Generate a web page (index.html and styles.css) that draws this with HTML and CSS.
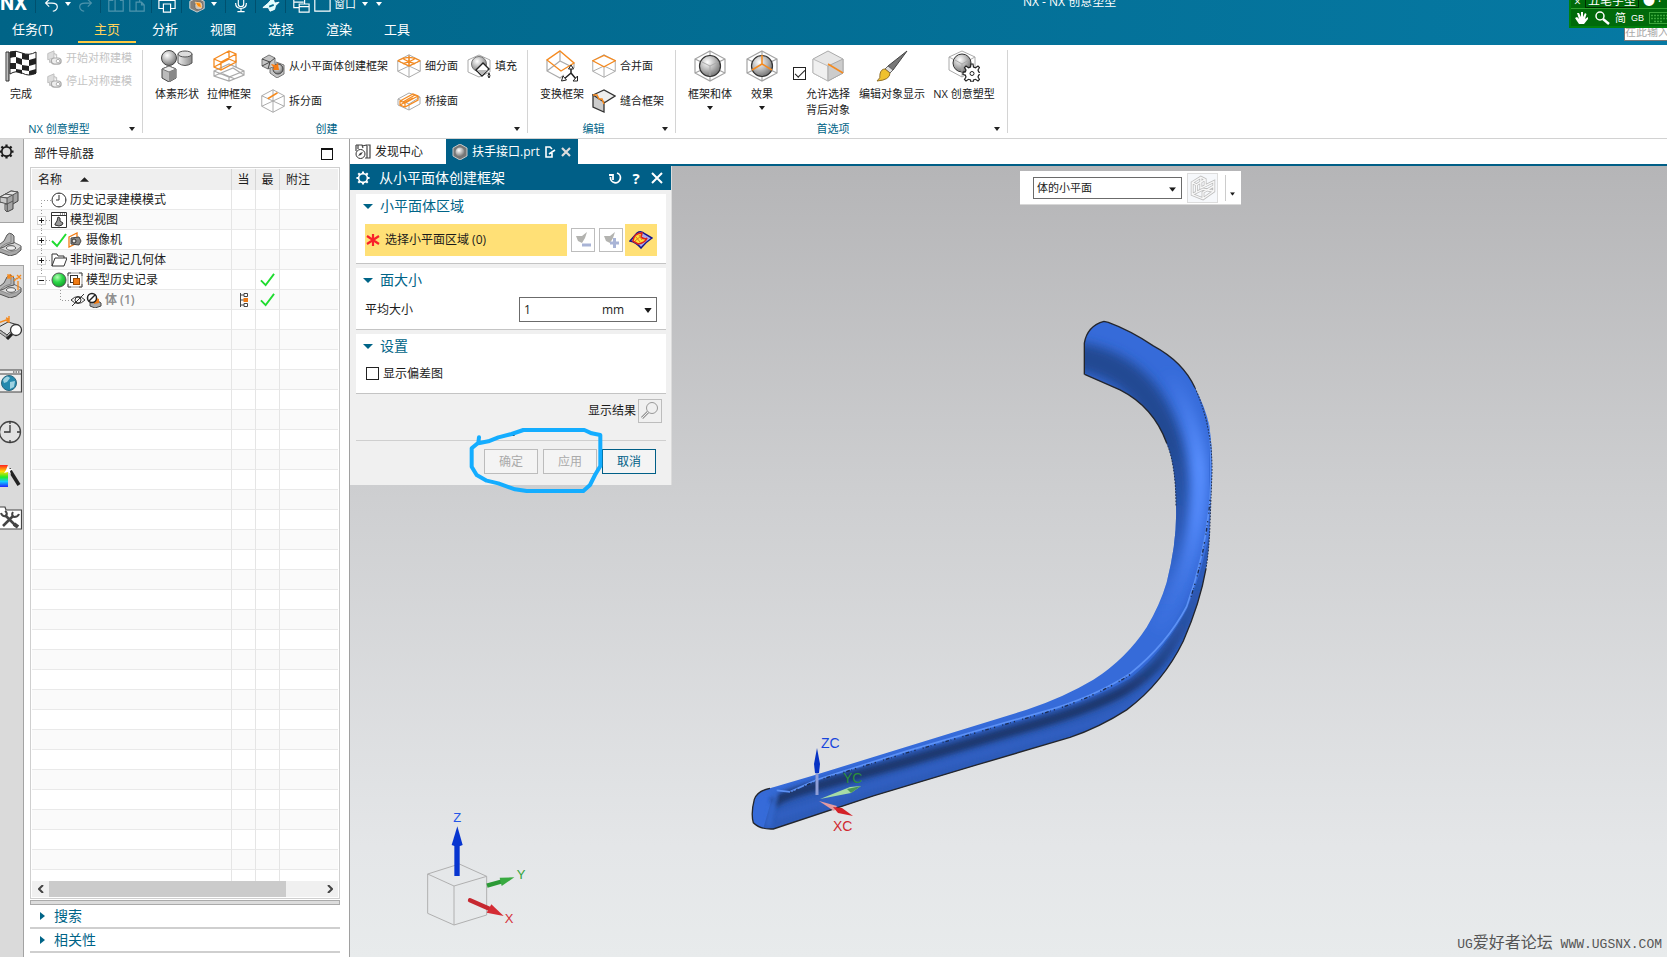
FILE: index.html
```html
<!DOCTYPE html>
<html lang="zh-CN">
<head>
<meta charset="utf-8">
<title>NX - NX 创意塑型</title>
<link rel="stylesheet" href="styles.css">
</head>
<body>
<svg class="defs" aria-hidden="true">
  <defs>
    <radialGradient id="ball" cx=".38" cy=".32" r=".7"><stop offset="0" stop-color="#fff"/><stop offset=".55" stop-color="#b5b5b5"/><stop offset="1" stop-color="#747474"/></radialGradient>
    <radialGradient id="greenball" cx=".38" cy=".3" r=".7"><stop offset="0" stop-color="#b8ffb8"/><stop offset=".5" stop-color="#2fd84a"/><stop offset="1" stop-color="#12a52c"/></radialGradient>
    <linearGradient id="steel" x1="0" x2="1"><stop offset="0" stop-color="#eee"/><stop offset="1" stop-color="#8a8a8a"/></linearGradient>
    <linearGradient id="rainbow" x1="0" x2="0" y1="0" y2="1"><stop offset="0" stop-color="#f22"/><stop offset=".3" stop-color="#fd0"/><stop offset=".55" stop-color="#2e2"/><stop offset=".75" stop-color="#1cf"/><stop offset="1" stop-color="#22f"/></linearGradient>
    <symbol id="hex" viewBox="0 0 32 32"><path d="M16 1 31 9V23L16 31 1 23V9ZM1 9 16 16 31 9M16 16V31M1 23 16 16 31 23M16 1V16" fill="none" stroke="#a3a3a3" stroke-width="1.2"/></symbol>
    <symbol id="arrow" viewBox="0 0 6 4"><path d="M0 0H6L3 4Z" fill="currentColor"/></symbol>
    <symbol id="tick" viewBox="0 0 16 16"><path d="M1 9 6 14 15 2" fill="none" stroke="#1fdc30" stroke-width="2"/></symbol>
    <symbol id="gear" viewBox="0 0 16 16"><circle cx="8" cy="8" r="5" fill="none" stroke="currentColor" stroke-width="1.800"/><path d="M8 .500V3M8 13V15.500M.500 8H3M13 8H15.500M2.600 2.600 4.400 4.400M11.600 11.600 13.400 13.400M2.600 13.400 4.400 11.600M11.600 4.400 13.400 2.600" stroke="currentColor" stroke-width="2.400"/></symbol>
    <symbol id="sym" viewBox="0 0 18 18"><path d="M2 4 9 1V9L2 11ZM4 11V14L9 13M9 4 12 5V9" fill="#ddd" stroke="#bbb"/><rect x="6" y="9" width="11" height="7" rx="3.5" fill="#eee" stroke="#aaa" stroke-width="1.4"/><circle cx="13.500" cy="12.500" r="2" fill="#fff" stroke="#aaa"/></symbol>
    <symbol id="plus" viewBox="0 0 19 20"><path d="M9.500 0V20M14 10.500H19" stroke="#999" stroke-dasharray="1 2"/><rect x="5.500" y="6.500" width="8" height="8" fill="#fff" stroke="#d0d0d0"/><path d="M7 10.500H12M9.500 8V13" stroke="#222"/></symbol>
    <symbol id="minus" viewBox="0 0 19 20"><path d="M9.500 0V6M14 10.500H19" stroke="#999" stroke-dasharray="1 2"/><rect x="5.500" y="6.500" width="8" height="8" fill="#fff" stroke="#d0d0d0"/><path d="M7 10.500H12" stroke="#222"/></symbol>
    <symbol id="first" viewBox="0 0 19 20"><path d="M9.500 20V10.500H19" fill="none" stroke="#999" stroke-dasharray="1 2"/></symbol>
    <symbol id="leaf" viewBox="0 0 38 20"><path d="M28.500 0V10.500H38" fill="none" stroke="#999" stroke-dasharray="1 2"/></symbol>
    <symbol id="bracket" viewBox="0 0 24 24"><path d="M-2 15 6 12 14 10 22 14V18Q18 23 11 24L-2 19Z" fill="#a8a8a8" stroke="#555"/><path d="M-2 15 4 13 14 10 22 14Q19 19 10 20Z" fill="#d9d9d9" stroke="#777" stroke-width=".7"/><path d="M-2 13Q2 12 5 9L8 3Q10 0 13 2L15 4V11Q8 12 5 15L-2 17Z" fill="#b4b4b4" stroke="#555"/><path d="M12 2V10Q6 11 2 15" fill="none" stroke="#888"/><ellipse cx="12" cy="16" rx="4.500" ry="2.300" fill="#eee" stroke="#555"/></symbol>
  </defs>
</svg>

<header class="titlebar">
  <div class="quick">
    <span class="logo">NX</span><i class="sep"></i>
    <button aria-label="撤消"><svg viewBox="0 0 20 20"><path d="M5 9H11Q17 9 17 13 17 17 12 18M8 5 4 9 8 13" class="w"/></svg></button>
    <button class="mini" aria-label="撤消列表"><svg viewBox="0 0 6 4"><use href="#arrow"/></svg></button>
    <button class="dim" aria-label="重做"><svg viewBox="0 0 20 20"><path d="M15 9H9Q3 9 3 13 3 17 8 18M12 5 16 9 12 13" class="w"/></svg></button><i class="sep"></i>
    <button class="dim" aria-label="复制"><svg viewBox="0 0 20 20"><path d="M7 6H2V18H9M9 3H15L18 6V18H9ZM15 3V6H18" class="w"/></svg></button>
    <button class="dim" aria-label="粘贴"><svg viewBox="0 0 20 20"><path d="M9 18H2V3H13V8M9 8H15L18 11V18H9ZM15 8V11H18" class="w"/></svg></button><i class="sep"></i>
    <button aria-label="打印"><svg viewBox="0 0 20 20"><path d="M6 15H1V6H19V15H14M6 10H14V19H6Z" class="w"/></svg></button><i class="sep"></i>
    <button aria-label="显示"><svg viewBox="0 0 20 20"><path d="M2 7 10 3 18 7V15L10 19 2 15Z" fill="#857f79" stroke="#ddd"/><circle cx="12" cy="12" r="4.500" fill="#c9c4bf" stroke="#666"/><path d="M8 8 14 9 15 14 11 13Z" fill="#f80" stroke="#fc8"/></svg></button>
    <button class="mini" aria-label="显示选项"><svg viewBox="0 0 6 4"><use href="#arrow"/></svg></button><i class="sep"></i>
    <button aria-label="语音"><svg viewBox="0 0 20 20"><rect x="7" y="3" width="6" height="10" rx="3" class="w"/><path d="M4 9Q4 15 10 15 16 15 16 9M10 15V18M6 18.500H14" class="w"/></svg></button><i class="sep"></i>
    <button aria-label="触控"><svg viewBox="0 0 20 20"><path d="M1 14 7 9 12 3 14 9 19 8 15 12 14 16 9 18 7 14Z" fill="#dff" stroke="#fff"/><path d="M8 13 13 11" stroke="#05688b" stroke-width="2"/></svg></button><i class="sep"></i>
    <button aria-label="切换窗口"><svg viewBox="0 0 20 20"><path d="M8 14H2V4H14V10M2 8H13M8 10H19V19H8ZM8 13H19" class="w"/></svg></button>
    <button aria-label="窗口布局"><svg viewBox="0 0 20 20"><path d="M2 4H19V18H2Z" class="w"/></svg></button>
    <button class="word">窗口</button>
    <button class="mini" aria-label="窗口列表"><svg viewBox="0 0 6 4"><use href="#arrow"/></svg></button>
    <button class="mini" aria-label="更多"><svg viewBox="0 0 6 4"><use href="#arrow"/></svg></button>
  </div>
  <div class="caption">NX - NX 创意塑型</div>
  <nav class="menu">
    <a href="#task" class="task">任务(T)</a><a href="#home" class="on">主页</a><a href="#analysis">分析</a><a href="#view">视图</a><a href="#select">选择</a><a href="#render">渲染</a><a href="#tools">工具</a>
  </nav>
  <input class="search" aria-label="搜索命令" placeholder="在此输入">
  <div class="ime">
    <div class="ime-top"><span>×</span><b>五笔字型</b><span>● ·</span></div>
    <div class="ime-row">
      <svg width="14" height="14" viewBox="0 0 14 14"><path d="M4 13 0 7 2 6 4 8 2 2 4 2 6 6V1H8V6L10 2 11.500 3 10 8 13 6 13 8 9 13Z" fill="#fff"/></svg>
      <svg width="16" height="14" viewBox="0 0 16 14"><circle cx="6" cy="5" r="4" fill="none" stroke="#fff" stroke-width="1.500"/><path d="M9 8 15 13" stroke="#fff" stroke-width="2.500"/></svg>
      <span>简</span><span class="gb">GB</span>
      <svg width="18" height="12" viewBox="0 0 18 12"><rect x=".5" y=".5" width="22" height="11" fill="none" stroke="#3ba63b"/><path d="M2 3.500H18M2 6.500H18M5 9.500H14" stroke="#3ba63b" stroke-width="1.500" stroke-dasharray="2 1"/></svg>
    </div>
  </div>
</header>

<section class="ribbon" aria-label="功能区">
  <div class="group g1">
    <div class="tools">
      <button class="big"><svg viewBox="0 0 32 32"><path d="M1 2H4V31H1Z" fill="url(#steel)" stroke="#333"/><path d="M5 2Q11 0 17 3 24 6 31 2V23Q24 27 17 23 11 20 5 24Z" fill="#fff" stroke="#222"/><path d="M5 2Q8 1 11 1V7Q8 7 5 8ZM17 3Q21 5 24 4V10Q21 10 17 9ZM11 7 17 9V15L11 13ZM24 10 31 8V14L24 16ZM5 13 11 13V19L5 19ZM17 15 24 16V21L17 20ZM11 19 17 20V24L11 22ZM24 21 31 19V24L24 25Z" fill="#222"/></svg><span>完成</span></button>
      <div class="stack tight">
        <button class="small" disabled><svg viewBox="0 0 18 18"><use href="#sym"/></svg>开始对称建模</button>
        <button class="small" disabled><svg viewBox="0 0 18 18"><use href="#sym"/></svg>停止对称建模</button>
      </div>
    </div>
    <div class="glabel"><span>NX 创意塑型</span><svg viewBox="0 0 6 4"><use href="#arrow"/></svg></div>
  </div>
  <div class="group g2">
    <div class="tools">
      <button class="big"><svg viewBox="0 0 32 32"><path d="M17 4V13Q24 18 31 13V4Z" fill="url(#steel)" stroke="#555"/><ellipse cx="24" cy="4" rx="7" ry="3" fill="#ddd" stroke="#555"/><circle cx="8" cy="8" r="7.500" fill="url(#ball)" stroke="#444"/><path d="M8 16 15 19V28L8 32 1 28V19Z" fill="#bbb" stroke="#444"/><path d="M1 19 8 22 15 19 8 16Z" fill="#eee" stroke="#777"/><path d="M8 22V32L15 28V19Z" fill="#888"/></svg><span>体素形状</span></button>
      <button class="big"><svg viewBox="0 0 32 32"><path d="M1 21 16 14 31 21V25L16 31 1 26ZM1 21 16 27 31 21M16 27V31M1 26 20 18 31 25M8 23 22 29M23 10V18" fill="none" stroke="#aaa" stroke-width="1.200"/><path d="M1 9 16 1 23 4V12L8 20 1 17ZM1 9 8 12 23 4M8 12V20M16 1V9L1 17M16 9 23 12" fill="none" stroke="#f58a1f" stroke-width="1.300"/></svg><span>拉伸框架</span><svg class="dd" viewBox="0 0 6 4"><use href="#arrow"/></svg></button>
      <div class="stack c1">
        <button class="small"><svg viewBox="0 0 24 24"><path d="M1 5 8 1 14 4V12L7 15 1 12ZM9 14V19L16 24 23 20V11L15 8" fill="#c5c5c5" stroke="#777"/><path d="M1 5 9 8 14 4M9 8 7 15M1 12 9 8" fill="none" stroke="#444"/><circle cx="17" cy="15" r="5" fill="url(#ball)" stroke="#444"/><path d="M10 10 15 11 17 9 18 16 12 16 13 14Z" fill="#f47b14"/></svg>从小平面体创建框架</button>
        <button class="small"><svg viewBox="0 0 32 32"><use href="#hex"/><path d="M9 13 22 5" stroke="#f58a1f" stroke-width="2"/></svg>拆分面</button>
      </div>
      <div class="stack c2">
        <button class="small"><svg viewBox="0 0 32 32"><use href="#hex"/><path d="M1 9Q16 0 31 9M1 9 16 16 31 9M8 6Q12 9 24 13M24 6Q20 9 8 13M16 2V16" fill="none" stroke="#f58a1f" stroke-width="1.800"/></svg>细分面</button>
        <button class="small"><svg viewBox="0 0 24 24"><path d="M1 10 12 4 23 8V15L12 21 1 16ZM1 10 12 15 23 8M12 15V21" fill="none" stroke="#aaa"/><path d="M3 12 16 5 21 7V11L8 18 3 16ZM3 12 8 14 21 7M8 14V18M6 13 18 6M3 16 16 9" fill="none" stroke="#f58a1f" stroke-width="1.300"/></svg>桥接面</button>
      </div>
      <div class="stack">
        <button class="small"><svg viewBox="0 0 24 24"><path d="M12 1 23 6V18L12 23 1 18V6Z" fill="none" stroke="#aaa"/><circle cx="12" cy="10" r="7.500" fill="url(#ball)" stroke="#777"/><path d="M9 16 16 9 22 15 15 22Z" fill="#fff" stroke="#222" stroke-width="1.400"/><path d="M10 16H21L15 21Z" fill="#bbb"/><path d="M22 19Q20 22 22 24 24 22 22 19Z" fill="#fff" stroke="#222"/></svg>填充</button>
        <span class="small"></span>
      </div>
    </div>
    <div class="glabel"><span>创建</span><svg viewBox="0 0 6 4"><use href="#arrow"/></svg></div>
  </div>
  <div class="group g3">
    <div class="tools">
      <button class="big"><svg viewBox="0 0 32 32"><path d="M1 10V21L14 28 18 25M14 11V1M1 21 14 11 28 18M28 13V18" fill="none" stroke="#aaa" stroke-width="1.200"/><path d="M14 1 28 13 15 21 1 10Z" fill="none" stroke="#f58a1f" stroke-width="1.400"/><path d="M25 23V17M25 23 18 29M25 23 30 29" stroke="#222" stroke-width="1.500"/><path d="M22.500 19 25 15 27.500 19ZM17 26 15.500 31 20.500 30ZM31.500 26V31H27Z" fill="#fff" stroke="#222"/></svg><span>变换框架</span></button>
      <div class="stack">
        <button class="small"><svg viewBox="0 0 32 32"><use href="#hex"/><path d="M1 9 16 2 31 9 16 17Z" fill="#fff" stroke="#f58a1f" stroke-width="1.800"/></svg>合并面</button>
        <button class="small"><svg viewBox="0 0 24 24"><path d="M1 6 12 1 23 7 12 14Z" fill="#eee" stroke="#333" stroke-width="1.300"/><path d="M1 6 12 13V23L1 18Z" fill="#ccc" stroke="#333" stroke-width="1.300"/><path d="M1 6 5 6 7 10 10 10 12 15" fill="none" stroke="#f58a1f" stroke-width="1.600"/></svg>缝合框架</button>
      </div>
    </div>
    <div class="glabel"><span>编辑</span><svg viewBox="0 0 6 4"><use href="#arrow"/></svg></div>
  </div>
  <div class="group g4">
    <div class="tools">
      <button class="big"><svg viewBox="0 0 32 32"><use href="#hex"/><circle cx="16" cy="16" r="10.500" fill="url(#ball)" stroke="#333" stroke-width="1.200"/><path d="M8 12 16 16 24 12M16 16V26" fill="none" stroke="#aaa"/></svg><span>框架和体</span><svg class="dd" viewBox="0 0 6 4"><use href="#arrow"/></svg></button>
      <button class="big effect"><svg viewBox="0 0 32 32"><use href="#hex"/><circle cx="16" cy="16" r="10.500" fill="url(#ball)" stroke="#333" stroke-width="1.200"/><path d="M16 5V14L6 20M16 14 26 20" fill="none" stroke="#f58a1f" stroke-width="1.500"/></svg><span>效果</span><svg class="dd" viewBox="0 0 6 4"><use href="#arrow"/></svg></button>
      <label class="big checkbig"><input type="checkbox" class="box" checked><span class="col"><svg viewBox="0 0 32 32"><path d="M16 1 31 9V23L16 31 1 23V9Z" fill="#e6e6e6" stroke="#aaa"/><path d="M1 9 16 16V31L1 23Z" fill="#f0f0f0" stroke="#bbb"/><path d="M16 16 31 9V23L16 31Z" fill="#ccc" stroke="#aaa"/><path d="M16 14 31 23" stroke="#f58a1f" stroke-width="1.500"/></svg><span>允许选择<br>背后对象</span></span></label>
      <button class="big wide"><svg viewBox="0 0 32 32"><path d="M31 1 17 20 12 16Z" fill="#777" stroke="#444"/><path d="M17 20 12 16 9 19 14 23Z" fill="#ddd" stroke="#666"/><path d="M9 19 14 23Q14 30 1 31 5 28 4 24 5 19 9 19Z" fill="#efc12e" stroke="#93722b"/></svg><span>编辑对象显示</span></button>
      <button class="big wide"><svg viewBox="0 0 32 32"><path d="M14 1 27 7V19L14 27 1 20V7ZM1 7 14 14 27 7M14 14V27" fill="none" stroke="#aaa"/><circle cx="14" cy="13" r="9" fill="url(#ball)" stroke="#333"/><path d="M7 10 14 14 21 10M14 14V22" fill="none" stroke="#aaa"/><path d="M23 14H25L25.500 17 27.500 17.800 30 16 31.500 17.500 30 20 30.700 22 33 22.500V24.500L30.700 25 30 27 31.500 29.500 30 31 27.500 29.300 25.500 30 25 32H23L22.500 30 20.500 29.300 18 31 16.500 29.500 18 27 17.300 25 15 24.500V22.500L17.300 22 18 20 16.500 17.500 18 16 20.500 17.800 22.500 17Z" fill="#fff" stroke="#222" stroke-width="1.200"/><circle cx="24" cy="23.500" r="2" fill="none" stroke="#222"/></svg><span>NX 创意塑型</span></button>
    </div>
    <div class="glabel"><span>首选项</span><svg viewBox="0 0 6 4"><use href="#arrow"/></svg></div>
  </div>
</section>

<div class="work">
  <nav class="rail" aria-label="资源条">
    <button aria-label="设置"><svg class="s14" viewBox="0 0 16 16"><use href="#gear"/></svg></button>
    <button aria-label="装配导航器"><svg viewBox="0 0 24 24"><path d="M1 9 12 3 19 4V13L14 16V21L8 24V15L1 14Z" fill="#a5a5a5" stroke="#444"/><path d="M1 9 12 3 19 4 8 10Z" fill="#e4e4e4" stroke="#555"/><path d="M1 9 8 10V16L1 14ZM8 16V24L6 22V16Z" fill="#c9c9c9" stroke="#555"/><path d="M14 7V16M8 16 14 13M6 6 13 7" fill="none" stroke="#555"/></svg></button>
    <button class="on" aria-label="部件导航器"><svg viewBox="0 0 24 24"><use href="#bracket"/></svg></button>
    <button aria-label="约束导航器"><svg viewBox="0 0 24 24"><use href="#bracket"/><path d="M9 0V5M9 2.500H15M12 0 9 2.500 12 5M18 1 22 5M22 1 18 5M15 7 18 4M19 7V16" fill="none" stroke="#f58a1f" stroke-width="1.300"/></svg></button>
    <button aria-label="重用库"><svg viewBox="0 0 24 24"><path d="M-2 12 9 6 19 9 8 19Z" fill="#e4e4e4" stroke="#333"/><path d="M-2 12 8 19V22L-2 15Z" fill="#bbb" stroke="#555"/><path d="M8 23 14 17" stroke="#222" stroke-width="3"/><circle cx="17" cy="14" r="5.500" fill="#fff" stroke="#333" stroke-width="1.300"/><path d="M-1 7 10 3M10 0V7M7 2 10 3 8 6" fill="none" stroke="#f58a1f" stroke-width="1.400"/></svg></button>
    <button aria-label="浏览器"><svg viewBox="0 0 24 24"><path d="M-2 1H22.500V23H-2ZM-2 5H22.500" fill="#eee" stroke="#444" stroke-width="1.200"/><path d="M14 3H21" stroke="#333" stroke-dasharray="1.500 1"/><circle cx="10" cy="14" r="7.500" fill="#2489ae" stroke="#29667d"/><path d="M4 11Q8 5 11 9L8 13 5 14ZM11 13 16 12 15 18 11 20Z" fill="#9ed2e1"/></svg></button>
    <button aria-label="历史记录"><svg viewBox="0 0 24 24"><circle cx="11" cy="12" r="10.500" fill="#e2e2e2" stroke="#444" stroke-width="1.300"/><path d="M11 5V12H5M11 1V4M11 20V23M18 12H21" fill="none" stroke="#333" stroke-width="1.300"/></svg></button>
    <button aria-label="系统材料"><svg viewBox="0 0 24 24"><path d="M-3 1H9V23H-3Z" fill="url(#rainbow)"/><path d="M10 5 20 21" stroke="#222" stroke-width="3.500"/><path d="M9 1 10 5 14 5 11 7 12 11 9 8 5 9 7 6Z" fill="#fff"/></svg></button>
    <button aria-label="角色"><svg viewBox="0 0 24 24"><path d="M-2 4V1H6L7 4H22.500V23H-2" fill="#fff" stroke="#444" stroke-width="1.200"/><path d="M4 20 14 10M6 9 17 20" stroke="#444" stroke-width="2.600"/><path d="M2 7Q3 11 7 10 9 7 6 5M14 6Q12 9 15 11 19 11 20 8" fill="none" stroke="#444" stroke-width="2"/><path d="M15 18 19 21" stroke="#444" stroke-width="4"/></svg></button>
  </nav>

  <aside class="navigator">
    <div class="nav-title"><h2>部件导航器</h2><button class="maxi" aria-label="最大化"></button></div>
    <div class="tree">
      <div class="tree-body">
      <table>
        <colgroup><col class="w-name"><col class="w-flag"><col class="w-flag"><col></colgroup>
        <thead><tr><th>名称<svg class="sort" viewBox="0 0 10 5"><path d="M0 5 5 0 10 5Z" fill="#222"/></svg></th><th class="c">当</th><th class="c">最</th><th>附注</th></tr></thead>
        <tbody>
          <tr><td><div class="node"><svg class="ex" viewBox="0 0 19 20"><use href="#first"/></svg><svg class="ic" viewBox="0 0 16 16"><circle cx="8" cy="8" r="7" fill="#fff" stroke="#333"/><path d="M8 3V8H5M8 1V2M8 14V15M14 8H15" fill="none" stroke="#333"/></svg>历史记录建模模式</div></td><td></td><td></td><td></td></tr>
          <tr><td><div class="node"><svg class="ex" viewBox="0 0 19 20"><use href="#plus"/></svg><svg class="ic" viewBox="0 0 16 16"><path d="M.5 .5H15.500V15.500H.5ZM.5 3.500H15.500" fill="#fff" stroke="#333"/><path d="M9 2H15" stroke="#333" stroke-dasharray="1 1"/><path d="M4 12 6 9 7 5 9 6V9L12 11 11 13 8 14 4 13Z" fill="#999" stroke="#333"/></svg>模型视图</div></td><td></td><td></td><td></td></tr>
          <tr><td><div class="node"><svg class="ex" viewBox="0 0 19 20"><use href="#plus"/></svg><svg class="ic" viewBox="0 0 16 16"><use href="#tick"/></svg><svg class="ic" viewBox="0 0 16 16"><path d="M2 5 10 1V11L2 15Z" fill="#fff" stroke="#f07b14" stroke-width="1.300"/><path d="M4 6 12 5 14 9 12 13 4 12Z" fill="#888" stroke="#444"/><circle cx="7" cy="9" r="2" fill="#ddd" stroke="#333"/></svg>摄像机</div></td><td></td><td></td><td></td></tr>
          <tr><td><div class="node"><svg class="ex" viewBox="0 0 19 20"><use href="#plus"/></svg><svg class="ic" viewBox="0 0 16 16"><path d="M1 14V2H6L7 4H13V6M1 14 4 6H16L13 14Z" fill="#fff" stroke="#333"/></svg>非时间戳记几何体</div></td><td></td><td></td><td></td></tr>
          <tr><td><div class="node"><svg class="ex" viewBox="0 0 19 20"><use href="#minus"/></svg><svg class="ic" viewBox="0 0 16 16"><circle cx="8" cy="8" r="7" fill="url(#greenball)" stroke="#555"/></svg><svg class="ic" viewBox="0 0 16 16"><path d="M1 1H15V15H1Z" fill="none" stroke="#999"/><path d="M1 4V1H4M12 1H15V4M15 12V15H12M4 15H1V12" fill="none" stroke="#555"/><rect x="3.500" y="3.500" width="7" height="7" fill="#fff" stroke="#333"/><rect x="6.500" y="6.500" width="6" height="6" fill="#f07b14" stroke="#a34c00"/></svg>模型历史记录</div></td><td></td><td class="c"><svg class="tk" viewBox="0 0 16 16"><use href="#tick"/></svg></td><td></td></tr>
          <tr><td><div class="node muted"><svg class="ex2" viewBox="0 0 38 20"><use href="#leaf"/></svg><svg class="ic" viewBox="0 0 16 16"><path d="M1 8Q8 1 15 8 8 15 1 8ZM2 14 14 2" fill="none" stroke="#333"/><circle cx="8" cy="8" r="3" fill="none" stroke="#333"/></svg><svg class="ic" viewBox="0 0 16 16"><path d="M4 11 9 7 15 11V14L9 16 4 14Z" fill="#aaa" stroke="#444"/><path d="M8 5 13 7 13 11 8 12Z" fill="#f07b14"/><circle cx="6" cy="6" r="4.500" fill="#fff" stroke="#222" stroke-width="1.500"/><path d="M3 9 9 3" stroke="#222" stroke-width="1.500"/></svg>体 (1)</div></td><td class="c"><svg class="hist" viewBox="0 0 10 16"><path d="M1.500 1V15M1.500 3H5M1.500 8H5M1.500 13H5" stroke="#444"/><path d="M5 1.500H8.500V4.500H5ZM5 11.500H8.500V14.500H5Z" fill="#fff" stroke="#444"/><path d="M4.500 6H9V10H4.500Z" fill="#f07b14"/></svg></td><td class="c"><svg class="tk" viewBox="0 0 16 16"><use href="#tick"/></svg></td><td></td></tr>
          <tr><td></td><td></td><td></td><td></td></tr><tr><td></td><td></td><td></td><td></td></tr>
          <tr><td></td><td></td><td></td><td></td></tr><tr><td></td><td></td><td></td><td></td></tr>
          <tr><td></td><td></td><td></td><td></td></tr><tr><td></td><td></td><td></td><td></td></tr>
          <tr><td></td><td></td><td></td><td></td></tr><tr><td></td><td></td><td></td><td></td></tr>
          <tr><td></td><td></td><td></td><td></td></tr><tr><td></td><td></td><td></td><td></td></tr>
          <tr><td></td><td></td><td></td><td></td></tr><tr><td></td><td></td><td></td><td></td></tr>
          <tr><td></td><td></td><td></td><td></td></tr><tr><td></td><td></td><td></td><td></td></tr>
          <tr><td></td><td></td><td></td><td></td></tr><tr><td></td><td></td><td></td><td></td></tr>
          <tr><td></td><td></td><td></td><td></td></tr><tr><td></td><td></td><td></td><td></td></tr>
          <tr><td></td><td></td><td></td><td></td></tr><tr><td></td><td></td><td></td><td></td></tr>
          <tr><td></td><td></td><td></td><td></td></tr><tr><td></td><td></td><td></td><td></td></tr>
          <tr><td></td><td></td><td></td><td></td></tr><tr><td></td><td></td><td></td><td></td></tr>
          <tr><td></td><td></td><td></td><td></td></tr><tr><td></td><td></td><td></td><td></td></tr>
          <tr><td></td><td></td><td></td><td></td></tr><tr><td></td><td></td><td></td><td></td></tr>
          <tr><td></td><td></td><td></td><td></td></tr><tr><td></td><td></td><td></td><td></td></tr>
        </tbody>
      </table>
      </div>
      <div class="hscroll"><button aria-label="向左"><svg viewBox="0 0 6 8"><path d="M5 0 1 4 5 8" fill="none" stroke="#444" stroke-width="2"/></svg></button><span class="track"><span class="thumb"></span></span><button aria-label="向右"><svg viewBox="0 0 6 8"><path d="M1 0 5 4 1 8" fill="none" stroke="#444" stroke-width="2"/></svg></button></div>
    </div>
    <div class="splitter"></div>
    <button class="fold"><svg viewBox="0 0 5 8"><path d="M0 0 5 4 0 8Z" fill="#006487"/></svg>搜索</button>
    <button class="fold"><svg viewBox="0 0 5 8"><path d="M0 0 5 4 0 8Z" fill="#006487"/></svg>相关性</button>
  </aside>

  <main class="main">
    <div class="tabs">
      <a href="#discover" class="tab"><svg viewBox="0 0 16 16"><path d="M1 1H7L8 4M1 1V7M3 1V5M7 2 12 1V14M13 1H15V14H10" fill="none" stroke="#444" stroke-width="1.200"/><circle cx="5.500" cy="10" r="4.500" fill="#fff" stroke="#333"/><path d="M3 12 5 9 8 8 6 11Z" fill="#444"/></svg>发现中心</a>
      <a href="#part" class="tab on"><svg viewBox="0 0 16 16"><path d="M8 0 15 4V12L8 16 1 12V4Z" fill="#777" stroke="#c8c8c8"/><circle cx="8" cy="8" r="4.500" fill="url(#ball)"/></svg>扶手接口.prt<svg class="t12" viewBox="0 0 12 12"><path d="M8 7V11H2V1H6L8 3M5 8 11 4" fill="none" stroke="#fff" stroke-width="1.600"/></svg><svg class="t12 x" viewBox="0 0 12 12"><path d="M2 2 10 10M10 2 2 10" stroke="#ddd" stroke-width="2.200"/></svg></a>
    </div>
    <div class="canvas">
      <svg class="model" viewBox="0 0 1500 1568" preserveAspectRatio="none" role="img" aria-label="扶手模型">
        <defs>
          <clipPath id="body"><path d="M1034 216 1033 125Q1042 75 1092 62L1105 65Q1170 88 1240 133 1330 180 1365 255 1395 310 1408 365 1418 430 1416 500L1410 650Q1408 720 1398 780 1380 880 1330 990 1270 1110 1160 1190 1080 1240 990 1270L710 1350 400 1440 100 1536Q60 1538 40 1518 32 1490 43 1450 52 1425 90 1418L230 1378 500 1297 860 1190Q970 1155 1060 1103 1160 1040 1220 950 1260 885 1280 820 1312 700 1308 600 1308 480 1280 415 1240 310 1140 261Z"/></clipPath>
          <filter id="b20" x="-20%" y="-20%" width="140%" height="140%"><feGaussianBlur stdDeviation="16"/></filter>
          <filter id="b7" x="-20%" y="-20%" width="140%" height="140%"><feGaussianBlur stdDeviation="7"/></filter>
          <linearGradient id="shade" gradientUnits="userSpaceOnUse" x1="0" y1="150" x2="0" y2="900"><stop offset="0" stop-color="#234a93"/><stop offset=".35" stop-color="#234a93"/><stop offset=".7" stop-color="#2b5ab8"/><stop offset="1" stop-color="#2f60c6" stop-opacity="0"/></linearGradient>
          <linearGradient id="shine" gradientUnits="userSpaceOnUse" x1="0" y1="200" x2="0" y2="1000"><stop offset="0" stop-color="#5a90ff" stop-opacity="0"/><stop offset=".35" stop-color="#5a90ff"/><stop offset=".55" stop-color="#5389fa"/><stop offset="1" stop-color="#4a7fee" stop-opacity="0"/></linearGradient>
          <linearGradient id="side" gradientUnits="userSpaceOnUse" x1="0" y1="800" x2="0" y2="1150"><stop offset="0" stop-color="#24498f" stop-opacity="0"/><stop offset="1" stop-color="#1b376f"/></linearGradient>
        </defs>
        <g clip-path="url(#body)" fill="none">
          <path d="M0 0H1500V1568H0Z" fill="#366bd9"/>
          <path d="M980 160Q1140 175 1220 280 1300 390 1312 560 1320 740 1240 930" stroke="url(#shade)" stroke-width="84" filter="url(#b20)"/>
          <path d="M1280 200Q1390 380 1378 560 1370 760 1250 960" stroke="url(#shine)" stroke-width="46" filter="url(#b20)"/>
          <path d="M1416 620Q1400 760 1340 900 1280 1010 1170 1100 1040 1170 900 1205L500 1317 230 1398 130 1432 95 1450 60 1568H1500V620Z" fill="#2d5bb9"/>
          <path d="M1380 820Q1330 970 1250 1060 1190 1120 1110 1155 1020 1195 900 1228L500 1340 230 1412Q120 1440 100 1462" stroke="url(#side)" stroke-width="30" filter="url(#b7)"/>
          <path d="M1385 900Q1320 1080 1180 1170 1100 1220 1000 1245L700 1325 400 1410 110 1500" stroke="#3060c4" stroke-width="14" filter="url(#b7)"/>
          <path d="M1395 280Q1420 400 1410 580 1396 740 1340 890 1280 1000 1170 1085 1060 1155 900 1198L500 1310 230 1393 150 1428 110 1424" stroke="#5c91f5" stroke-width="5"/>
          <path d="M40 1450Q60 1415 95 1425 115 1440 98 1465L85 1530" stroke="#3669d2" stroke-width="14" filter="url(#b7)"/>
        </g>
        <path d="M1033 216V125Q1042 75 1092 62L1105 65Q1170 88 1240 133 1330 180 1365 255M1398 780Q1380 880 1330 990 1270 1110 1160 1190 1080 1240 990 1270L710 1350 400 1440 100 1536Q60 1538 40 1518 32 1490 43 1450 52 1425 90 1418M1034 216 1140 261Q1240 310 1280 415" fill="none" stroke="#24262c" stroke-width="4"/>
        <path d="M1365 255Q1418 370 1416 500L1410 650Q1408 720 1398 780M1280 415Q1308 480 1308 600" fill="none" stroke="#24324e" stroke-width="3" stroke-dasharray="5 4"/>
        <path d="M1410 580Q1396 740 1350 870M1170 1088Q1060 1158 900 1203L500 1315 230 1396 150 1430" fill="none" stroke="#1c2c50" stroke-width="4" stroke-dasharray="4 9 2 5 11 6 3 22"/>
      </svg>
      <svg class="wcs" viewBox="0 0 120 110" aria-label="工作坐标系">
        <path d="M27 33V55" stroke="#8f9fd8" stroke-width="3"/><path d="M27 8 30 24 29 33H25L24 24Z" fill="#0733c4"/>
        <path d="M30 59 60 47 71 46 61 53Z" fill="#a6dba6"/><path d="M57 49 71 46 61 53Z" fill="#4c9658"/>
        <path d="M29 61 47 66 44 71Z" fill="#e39a9f"/><path d="M43 67 52 68 63 76 48 73Z" fill="#d32228"/>
        <text x="31" y="8" fill="#1846dc">ZC</text><text x="53" y="43" fill="#2c8f3c">YC</text><text x="43" y="91" fill="#d02a30">XC</text>
      </svg>
      <svg class="triad" viewBox="0 0 450 450" aria-label="视图三重轴">
        <path d="M83 255 178 225 260 262V378L162 408 83 373ZM83 255 162 291 260 262M162 291V408" fill="none" stroke="#b0b0b0" stroke-width="3"/>
        <path d="M171 165V261" stroke="#0735d0" stroke-width="16"/><path d="M172 112 188 168Q172 176 155 168Z" fill="#0735d0"/>
        <path d="M261 290 310 276" stroke="#2c9a36" stroke-width="13"/><path d="M299 266 343 265 305 291Z" fill="#38aa40"/>
        <path d="M210 334 268 359" stroke="#c62830" stroke-width="13" stroke-linecap="round"/><path d="M274 346 311 381 260 371Z" fill="#d42c34"/>
        <text x="160" y="100" fill="#2456e8">Z</text><text x="350" y="270" fill="#33a33c">Y</text><text x="314" y="402" fill="#d63038">X</text>
      </svg>

      <div class="filterbar">
        <span class="combo"><select aria-label="选择范围"><option>体的小平面</option></select><svg viewBox="0 0 6 4"><use href="#arrow"/></svg></span>
        <button class="frame" aria-label="框架"><svg viewBox="0 0 24 24"><path d="M2 7 10 2 14 4V10L22 6V15L12 22 2 18ZM2 7 6 9 14 4M6 9V16M2 18 12 13 22 15M12 22V16L22 10M14 10 10 12V2" fill="none" stroke="#bdbdbd" stroke-width="2.600"/><path d="M2 7 10 2 14 4V10L22 6V15L12 22 2 18ZM2 7 6 9 14 4M6 9V16M2 18 12 13 22 15M12 22V16L22 10M14 10 10 12V2" fill="none" stroke="#f8f8f8" stroke-width="1.200"/></svg></button>
        <button class="more" aria-label="更多选项"><svg viewBox="0 0 6 4"><use href="#arrow"/></svg></button>
      </div>

      <form class="dialog" aria-label="从小平面体创建框架">
        <div class="dlg-title"><svg viewBox="0 0 16 16"><use href="#gear"/></svg><h2>从小平面体创建框架</h2>
          <button type="button" aria-label="重置"><svg viewBox="0 0 14 14"><path d="M9 2A5 5 0 1 1 2.500 6M1 4H5V9" fill="none" stroke="#fff" stroke-width="1.800"/></svg></button>
          <button type="button" class="q" aria-label="帮助">?</button>
          <button type="button" aria-label="关闭"><svg viewBox="0 0 14 14"><path d="M2 2 12 12M12 2 2 12" stroke="#fff" stroke-width="2"/></svg></button>
        </div>
        <div class="cards">
          <section class="card">
            <h3><svg viewBox="0 0 10 5"><path d="M0 0H10L5 5Z" fill="#006487"/></svg>小平面体区域</h3>
            <div class="pick">
              <button type="button" class="picker"><svg viewBox="0 0 14 14"><path d="M7 1V13M1 3 13 11M13 3 1 11" stroke="#f8202a" stroke-width="2.200"/></svg>选择小平面区域 (0)</button>
              <button type="button" class="tool" aria-label="减去"><svg viewBox="0 0 20 20"><path d="M14 2 9 6 3 6 5 11 9 13 12 8Z" fill="#b3b3b0"/><path d="M9 15H18" stroke="#a9b4d6" stroke-width="3"/></svg></button>
              <button type="button" class="tool" aria-label="添加"><svg viewBox="0 0 20 20"><path d="M14 2 9 6 3 6 5 11 9 13 12 8Z" fill="#b3b3b0"/><path d="M9 13H18M13.500 8V18" stroke="#a9b4d6" stroke-width="3"/></svg></button>
              <button type="button" class="tool active" aria-label="小平面"><svg viewBox="0 0 24 20"><path d="M1 11 8 3Q12 0 16 4L23 8Q17 12 12 18 7 12 1 11Z" fill="#a9a7e8" stroke="#14148c" stroke-width="1.500"/><path d="M4 11Q5 3 13 3L12 7Q16 10 18 8 16 13 9 14Z" fill="#fae03a" stroke="#e2231a" stroke-width="1.600"/><path d="M7 7 11 12M10 5 13 10M6 11 12 6" stroke="#e8741e"/></svg></button>
            </div>
          </section>
          <section class="card">
            <h3><svg viewBox="0 0 10 5"><path d="M0 0H10L5 5Z" fill="#006487"/></svg>面大小</h3>
            <div class="field"><label for="size">平均大小</label><span class="combo unit"><input id="size" value="1"><select aria-label="单位"><option>mm</option></select><svg viewBox="0 0 6 4"><use href="#arrow"/></svg></span></div>
          </section>
          <section class="card">
            <h3><svg viewBox="0 0 10 5"><path d="M0 0H10L5 5Z" fill="#006487"/></svg>设置</h3>
            <label class="opt"><input type="checkbox" class="box">显示偏差图</label>
          </section>
        </div>
        <div class="result"><label for="preview">显示结果</label><button type="button" id="preview" class="tool flat" aria-label="显示结果"><svg viewBox="0 0 20 20"><circle cx="12" cy="7" r="5.500" fill="none" stroke="#999"/><path d="M8 11 2 17" stroke="#999" stroke-width="3"/><path d="M8 11 2 17" stroke="#eee"/></svg></button></div>
        <div class="grip"><svg viewBox="0 0 6 3"><path d="M0 3 3 0 6 3Z" fill="#111"/></svg></div>
        <div class="actions"><button type="button" disabled>确定</button><button type="button" disabled>应用</button><button type="button">取消</button></div>
        <svg class="scribble" viewBox="360 360 420 240"><path d="M402 412 400 428 380 445V500L395 525 425 542 460 550 510 568 545 573H715L735 555 750 525 766 498V405L740 400 718 390H535L500 402 460 412 430 424 400 430" fill="none" stroke="#14adff" stroke-width="12" stroke-linejoin="round" stroke-linecap="round"/></svg>
      </form>
      <p class="mark"><span>UG</span>爱好者论坛<span> WWW.UGSNX.COM</span></p>
    </div>
  </main>
</div>
</body>
</html>
```
FILE: styles.css
```css
* { box-sizing: border-box; }
html, body { height: 100%; }
body { margin: 0; display: flex; flex-direction: column; overflow: hidden; background: #fff; color: #1b1b1b; font: 12px/16px "Open Sans", "Noto Sans CJK SC", sans-serif; }
button, input, select { font: inherit; color: inherit; }
button { border: 0; padding: 0; background: none; }
a { color: inherit; text-decoration: none; }
h2, h3, p { margin: 0; font-weight: 400; }
svg { display: block; flex: none; }
.defs { position: absolute; width: 0; height: 0; }

.titlebar { position: relative; flex: none; height: 45px; overflow: hidden; background: linear-gradient(90deg, #006487, #0679a3); color: #fff; display: flex; flex-direction: column; }
.quick { height: 16px; display: flex; align-items: flex-end; padding-bottom: 3px; }
.quick button { width: 21px; height: 18px; flex: none; display: flex; align-items: center; justify-content: center; }
.quick button svg { width: 18px; height: 18px; }
.quick .mini { width: 14px; }
.quick .mini svg { width: 8px; height: 4px; }
.quick .word { width: 26px; font-size: 11px; white-space: nowrap; }
.quick .dim { opacity: .3; }
.quick .sep { width: 1px; height: 16px; flex: none; margin: 0 4px; background: #00506e; }
.w { fill: none; stroke: #fff; stroke-width: 1.3; }
.logo { width: 31px; font: bold 20px/20px Roboto, sans-serif; }
.caption { position: absolute; left: 1023px; top: -6px; }
.menu { display: flex; height: 29px; font-size: 13px; }
.menu a { width: 58px; height: 27px; text-align: center; line-height: 26px; }
.menu .task { width: 78px; text-align: left; padding-left: 12px; }
.menu .on { color: #ffd25a; border-bottom: 2px solid #ffc940; }
.search { position: absolute; left: 1624px; top: 21px; width: 200px; height: 20px; padding: 0; border: 1px solid #777; background: #fff; font-size: 11px; }
.search::placeholder { color: #aaa; }
.ime { position: absolute; right: 0; top: 0; width: 98px; height: 28px; background: #006a0a; border: solid #00800c; border-width: 0 0 2px 2px; overflow: hidden; }
.ime-top { height: 9px; display: flex; align-items: flex-end; gap: 4px; padding-left: 3px; font-size: 12px; line-height: 12px; white-space: nowrap; border-bottom: 1px solid #30a030; }
.ime-top b { font-weight: 400; border: 1px solid #002e00; padding: 0 2px; }
.ime-row { display: flex; align-items: center; gap: 5px; height: 17px; padding-left: 4px; font-size: 11px; }
.gb { font-family: "Liberation Sans", sans-serif; font-size: 9px; }

.ribbon { flex: none; display: flex; height: 94px; border-bottom: 1px solid #d2d2d2; font-size: 11px; }
.group { position: relative; display: flex; flex-direction: column; justify-content: space-between; }
.group::after { content: ""; position: absolute; right: 0; top: 5px; bottom: 5px; width: 1px; background: #d4d4d4; }
.tools { display: flex; height: 75px; }
.g1 { width: 143px; }
.g2 { width: 385px; padding-left: 8px; }
.g3 { width: 148px; padding-left: 7px; }
.g4 { width: 332px; padding-left: 8px; }
.big { width: 52px; display: flex; flex-direction: column; align-items: center; padding-top: 5px; white-space: nowrap; line-height: 16px; }
.big svg { width: 32px; height: 32px; margin-bottom: 4px; }
.big .dd { width: 6px; height: 4px; margin-top: 4px; }
.g1 .big { width: 42px; }
.g3 .big { width: 54px; }
.big.wide { width: 72px; }
.checkbig { width: 68px; flex-direction: row; align-items: flex-start; padding-left: 5px; }
.col { display: flex; flex-direction: column; align-items: center; text-align: center; }
.checkbig .box { margin-top: 17px; }
.stack { display: flex; flex-direction: column; padding: 3px 0 0 9px; }
.g2 .stack { padding-left: 9px; }
.g2 .stack.c1 { padding-left: 6px; }
.g3 .stack { padding-left: 3px; }
.stack.tight { padding: 1px 0 0 4px; }
.small { display: flex; align-items: center; gap: 4px; height: 35px; white-space: nowrap; }
.small svg { width: 24px; height: 24px; }
.tight .small { height: 23px; }
.tight .small svg { width: 16px; height: 16px; }
.small:disabled { color: #c4c4c4; }
.glabel { position: relative; height: 18px; text-align: center; line-height: 17px; color: #006487; }
.g1 .glabel { padding-right: 25px; }
.g2 .glabel, .g4 .glabel { padding-right: 26px; }
.g3 .glabel { padding-right: 24px; }
.glabel svg { position: absolute; right: 8px; top: 7px; width: 6px; height: 4px; color: #222; }
.box { appearance: none; flex: none; width: 13px; height: 13px; margin: 0; border: 1px solid #222; background: #fff; display: grid; place-items: center; }
.box:checked::after { content: ""; width: 9px; height: 4px; border: solid #222; border-width: 0 0 1px 1px; transform: translateY(-1px) rotate(-45deg); }

.work { flex: 1; min-height: 0; display: flex; }
.rail { flex: none; width: 24px; background: #dadada; border-right: 1px solid #a3a3a3; display: grid; grid-template-rows: 39px 44px 44px 40px 44px 62px 40px 47px 38px; align-content: start; }
.rail button { display: flex; align-items: center; overflow: hidden; }
.rail button:first-child { align-items: flex-start; padding-top: 5px; }
.rail svg { width: 24px; height: 24px; margin-left: -1px; }
.rail .s14 { width: 15px; height: 15px; }
.rail .on { background: #fff; width: 24px; border: solid #a3a3a3; border-width: 1px 0; }
.navigator { flex: none; width: 325px; padding: 0 9px 4px 6px; display: flex; flex-direction: column; }
.nav-title { height: 28px; display: flex; align-items: center; justify-content: space-between; padding: 1px 7px 0 4px; }
.nav-title h2 { font-size: 12px; }
.maxi { width: 12px; height: 12px; border: 1px solid #111; border-top-width: 2px; }
.tree { flex: 1; min-height: 0; border: 1px solid #cfcfcf; padding: 1px; display: flex; flex-direction: column; }
.tree-body { flex: 1; min-height: 0; overflow: hidden; }
.tree table { width: 100%; table-layout: fixed; border-collapse: separate; border-spacing: 0; }
.w-name { width: 200px; }
.w-flag { width: 24px; }
.tree th { height: 21px; padding: 0 6px; background: #efefef; border-right: 1px solid #d6d6d6; font-weight: 400; text-align: left; }
.tree th:last-child, .tree td:last-child { border-right: 0; }
.tree td { height: 20px; padding: 0; border-right: 1px solid #e5e5e5; border-bottom: 1px solid #e9e9e9; }
.tree th.c { padding: 0; text-align: center; }
.tree tr:nth-child(even) td { background: #fafafa; }
.sort { display: inline-block; width: 9px; height: 5px; margin-left: 18px; vertical-align: 2px; }
.node { display: flex; align-items: center; height: 19px; overflow: hidden; white-space: nowrap; }
.ex { width: 19px; height: 20px; }
.ex2 { width: 38px; height: 20px; }
.ic { width: 16px; height: 16px; }
.node .ic:last-of-type { margin-right: 3px; }
.muted { color: #8f8f8f; font-weight: 600; }
.tk { width: 15px; height: 15px; margin: 0 auto; }
.hist { width: 10px; height: 16px; margin: 0 auto; }
.hscroll { height: 16px; display: flex; background: #f0f0f0; }
.hscroll button { width: 17px; display: grid; place-items: center; }
.hscroll svg { width: 6px; height: 8px; }
.track { flex: 1; display: flex; }
.thumb { width: 87%; background: #cbcbcb; }
.splitter { height: 5px; margin-top: 1px; background: #dcdcdc; border: 1px solid #aaa; }
.fold { height: 24px; display: flex; align-items: center; gap: 9px; padding-left: 10px; border-bottom: 2px solid #cfcfcf; font-size: 14px; color: #006487; }
.fold svg { width: 5px; height: 8px; }

.main { flex: 1; min-width: 0; display: flex; flex-direction: column; border-left: 1px solid #a0a0a0; }
.tabs { flex: none; height: 27px; display: flex; border-bottom: 2px solid #005f87; }
.tab { display: flex; align-items: center; gap: 4px; width: 96px; padding-left: 5px; }
.tab svg { width: 16px; height: 16px; }
.tab.on { width: 132px; padding-left: 6px; background: #005f87; color: #fff; white-space: nowrap; }
.tab .t12 { width: 12px; height: 12px; }
.canvas { position: relative; flex: 1; min-height: 0; overflow: hidden; background: linear-gradient(#b5b5b7, #cecfd1 42%, #e4e6e8 86%, #e8ebec); }
.model { position: absolute; left: 390px; top: 134px; width: 500px; height: 540px; }
.wcs { position: absolute; left: 440px; top: 574px; width: 120px; height: 110px; overflow: visible; }
.wcs text { font: 14px "Liberation Sans", sans-serif; }
.triad { position: absolute; left: 50px; bottom: 18px; width: 150px; height: 150px; }
.triad text { font: 39px "Liberation Sans", sans-serif; }
.filterbar { position: absolute; left: 670px; top: 5px; height: 34px; display: flex; align-items: center; padding: 0 6px 0 13px; background: #fff; border-bottom: 1px solid #d8d8d8; font-size: 11px; }
.combo { position: relative; display: flex; width: 149px; height: 22px; border: 1px solid #6b6b6b; background: #fff; }
.combo select { appearance: none; flex: 1; min-width: 0; border: 0; background: none; padding: 0 3px; }
.combo svg { position: absolute; right: 5px; top: 9px; width: 7px; height: 5px; pointer-events: none; }
.frame { width: 31px; height: 30px; margin-left: 5px; border: 1px solid #ddd; background: #f6f8fb; display: grid; place-items: center; }
.frame svg { width: 26px; height: 26px; }
.more { height: 26px; margin-left: 7px; padding: 12px 0 0 4px; border-left: 1px solid #ccc; }
.more svg { width: 5px; height: 4px; }

.dialog { position: absolute; left: 0; top: 0; width: 322px; background: #f0f0f0; border-right: 1px solid #dcdcdc; padding-bottom: 11px; }
.dlg-title { height: 24px; background: #005f87; color: #fff; display: flex; align-items: center; gap: 9px; padding: 0 7px 0 6px; }
.dlg-title svg { width: 14px; height: 14px; }
.dlg-title h2 { flex: 1; font-size: 14px; }
.q { width: 10px; font-size: 15px; font-weight: 700; }
.cards { display: flex; flex-direction: column; gap: 4px; padding: 4px 5px 0 6px; }
.card { background: #fff; border-bottom: 1px solid #c4c4c4; padding: 2px 9px 7px; }
.card h3 { display: flex; align-items: center; gap: 7px; height: 20px; margin-left: -2px; font-size: 14px; color: #006487; }
.card h3 svg { width: 10px; height: 5px; }
.pick { display: flex; align-items: center; gap: 4px; margin-top: 8px; height: 32px; }
.picker { flex: 1; height: 32px; display: flex; align-items: center; gap: 5px; padding-left: 1px; background: #ffe076; }
.picker svg { width: 14px; height: 14px; }
.tool { width: 24px; height: 24px; border: 1px solid #bdbdbd; background: #fff; display: grid; place-items: center; }
.tool svg { width: 20px; height: 20px; }
.tool.active { width: 32px; height: 32px; margin-left: -2px; border: 0; background: #ffe076; }
.tool.active svg { width: 24px; height: 20px; }
.tool.flat { background: #f0f0f0; }
.field { display: flex; align-items: center; justify-content: space-between; margin-top: 7px; }
.unit { width: 138px; height: 25px; }
.unit input { width: 79px; border: 0; padding: 0 4px; background: none; }
.unit svg { right: 4px; top: 10px; width: 8px; }
.opt { display: flex; align-items: center; gap: 4px; margin: 9px 0 4px 1px; height: 17px; }
.result { display: flex; align-items: center; justify-content: flex-end; gap: 2px; padding: 5px 9px 0 0; }
.grip { height: 18px; margin: 0 5px 0 6px; border-bottom: 1px solid #cfcfcf; padding: 10px 0 0 153px; }
.grip svg { width: 6px; height: 3px; }
.actions { display: flex; justify-content: flex-end; gap: 5px; padding: 8px 15px 0 0; }
.actions button { width: 54px; height: 25px; border: 1px solid #005f87; color: #005f87; background: #f4f4f4; }
.actions button:disabled { border-color: #bcbcbc; color: #aaa; }
.scribble { position: absolute; left: 115px; top: 254px; width: 140px; height: 80px; pointer-events: none; }
.mark { position: absolute; right: 5px; bottom: 3px; font: 16px/18px "Noto Sans CJK SC", sans-serif; color: #555; white-space: pre; }
.mark span { font: 13px/18px "Liberation Mono", monospace; }
```
